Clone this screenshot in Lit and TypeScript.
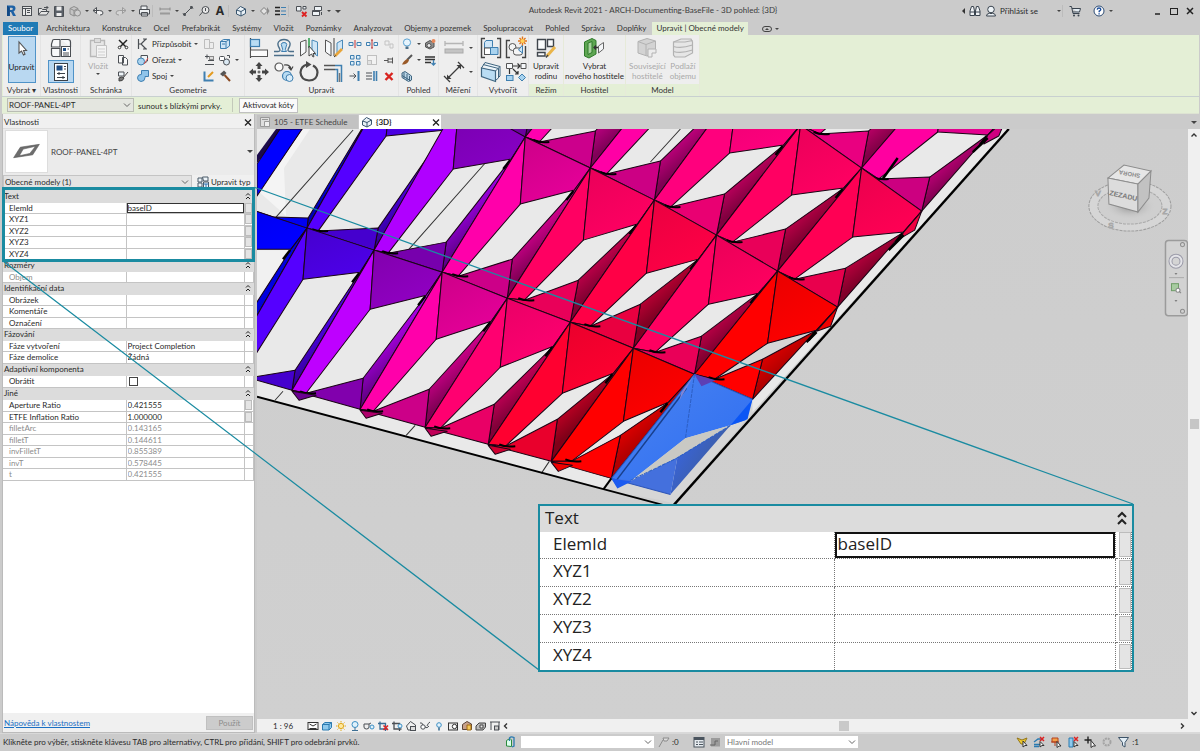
import { LitElement, html, svg, css, nothing } from "lit";
import { customElement, property } from "lit/decorators.js";
import { classMap } from "lit/directives/class-map.js";

type Pt = [number, number];

/* ---------- icon library ---------- */

const K = "#4b4f54";
const B = "#3f7fb0";
const L = "#a9d3ef";

const small: Record<string, unknown> = {
  revit: svg`<path d="M4 2.500H9.500Q12.500 2.700 12.500 5.600Q12.500 7.800 10.500 8.500L13 13H10L8 9H6.800V13H4ZM6.800 4.700V7H8.600Q9.800 7 9.800 5.800Q9.800 4.700 8.600 4.700Z" fill="#1e62a6"/><path d="M4 2.500L6.800 4.700V13H4Z" fill="#134a86"/>`,
  home: svg`<rect x="3.500" y="3.500" width="9" height="9" fill="#e8e8e8" stroke="${K}"/><path d="M3.500 5.500H12.500M6.500 5.500V12.500M8 7.500H11M8 9.500H11" stroke="${K}" fill="none"/>`,
  open: svg`<path d="M3.500 12V5.500H6.500L7.500 6.500H11.500V8.500M3.500 12L6 8.500H14L11.500 12Z" fill="#e4e4e4" stroke="${K}"/><path d="M9 4.500H13M11.500 3L13 4.500L11.500 6" stroke="${K}" fill="none"/>`,
  save: svg`<path d="M3.500 3.500H12.500V13.500H3.500Z" fill="#5a6068" stroke="${K}"/><rect x="5.500" y="3.500" width="5" height="4" fill="#eee"/><rect x="5.500" y="10" width="5" height="3" fill="#eee"/>`,
  sync: svg`<path d="M3 5.500L7 3.500L11 5.500V11L7 13L3 11ZM3 5.500L7 7.500L11 5.500M7 7.500V13" fill="#c4c4c4" stroke="#8e8e8e"/><circle cx="10.500" cy="10" r="3" fill="#cfcfcf" stroke="#8e8e8e"/>`,
  undo: svg`<path d="M3 7.500H9.500Q13 7.500 13 10Q13 12 10 12M3 7.500L6.500 4.500V10.500Z" fill="#f0f0f0" stroke="${K}"/>`,
  redo: svg`<path d="M13 7.500H6.500Q3 7.500 3 10Q3 12 6 12M13 7.500L9.500 4.500V10.500Z" fill="#d4d4d4" stroke="#9c9c9c"/>`,
  print: svg`<path d="M5 6V3H11V6M3.500 6.500H13.500V11H3.500ZM5.500 9.500H11.500V13H5.500Z" fill="#eef1f3" stroke="${K}"/>`,
  measure: svg`<path d="M3 6H13M3 4.500V7.500M13 4.500V7.500" stroke="#8a8a8a"/><rect x="3" y="9.500" width="10" height="2" fill="#9a9a9a"/>`,
  dim: svg`<path d="M4 12L12 4M3 10.500L5.500 13M10.500 3L13 5.500" stroke="${K}"/><circle cx="4.500" cy="11.500" r="1.400" fill="${K}"/><circle cx="11.500" cy="4.500" r="1.400" fill="${K}"/>`,
  tag: svg`<path d="M3.500 12.500L7 8.500" stroke="${K}"/><circle cx="9.500" cy="7" r="3.500" fill="#e6e6e6" stroke="${K}"/><path d="M9.500 5V8" stroke="${K}"/>`,
  box3d: svg`<path d="M3.500 7L7.500 3.500L12.500 6V10.500L8 13L3.500 11Z" fill="#e9f1f7" stroke="#39556e"/><path d="M3.500 7L8 8.500L12.500 6M8 8.500V13" fill="none" stroke="#39556e"/>`,
  diamond: svg`<path d="M8 4.500L11.500 8L8 11.500L4.500 8Z" fill="#e2e2e2" stroke="#7d7d7d"/><path d="M11 4V12L13.500 8Z" fill="#8a8a8a"/>`,
  thin: svg`<path d="M3 4.500H8M3 8H8M3 11.500H8" stroke="#222" stroke-width="1.500"/><path d="M9 4.500H14M9 8H14M9 11.500H14" stroke="${B}"/>`,
  closeWin: svg`<path d="M3.500 3.500H8V8H3.500ZM10 3.500H13V6H10Z" fill="#eef2f5" stroke="${K}"/><path d="M9 9L13.500 13.500M13.500 9L9 13.500" stroke="#d22" stroke-width="1.800"/>`,
  switchWin: svg`<path d="M5.500 3.500H12.500V7.500H5.500ZM3.500 7.500H10.500V12.500H3.500Z" fill="#eef2f5" stroke="${K}"/><path d="M3.500 8.500H10.500M12.500 9V12" stroke="${K}"/>`,
  binoc: svg`<path d="M3 8L4.500 3.500H6.500L7.500 8V12.500H3ZM13 8L11.500 3.500H9.500L8.500 8V12.500H13Z" fill="#f0f3f6" stroke="#39434e"/><path d="M3 9H7.500M8.500 9H13" stroke="#39434e"/>`,
  user: svg`<circle cx="8" cy="6.500" r="3.300" fill="#eef4f8" stroke="#39434e"/><path d="M3.500 13Q3.500 10.500 6.500 10.300Q8 11 9.500 10.300Q12.500 10.500 12.500 13Z" fill="#eef4f8" stroke="#39434e"/>`,
  cart: svg`<path d="M2.500 3.500H4.500L6 10.500H12.500M5 5.500H13.500L12.500 9H6" fill="#e3edf5" stroke="#39434e"/><circle cx="7" cy="12.500" r="1" fill="#39434e"/><circle cx="11.500" cy="12.500" r="1" fill="#39434e"/>`,
  help: svg`<circle cx="8" cy="8" r="5" fill="#fff" stroke="#2d4b73"/><path d="M6.200 6.600Q6.300 5 8 5Q9.800 5 9.800 6.500Q9.800 7.500 8.200 8.200V9.200M8.100 10.300V11.500" stroke="#1d4f9c" stroke-width="1.400" fill="none"/>`,
  cut: svg`<path d="M4 4L12 12M12 4L4 12" stroke="#222" stroke-width="1.500"/><circle cx="4.500" cy="11.500" r="1.300" fill="#fff" stroke="#333"/><circle cx="11.500" cy="11.500" r="1.300" fill="#fff" stroke="#333"/>`,
  copy: svg`<path d="M3.500 3.500H8.500V11H3.500ZM7.500 5.500H10.500L12.500 7.500V13H7.500Z" fill="#f8f8f8" stroke="${K}"/>`,
  brush: svg`<path d="M3.500 4H9V8H3.500Z" fill="#eef4f8" stroke="${K}"/><path d="M13 4L8 10M4 10Q7 8 9 10Q8 13.500 4 13Z" fill="#777" stroke="#444"/>`,
  cope: svg`<path d="M3.500 3V13M3.500 8H6M11 3L6 8L11 13M8 3L12 3M8 13H12" fill="none" stroke="${K}" stroke-width="1.200"/>`,
  trimCut: svg`<path d="M6 3.500H12.500V9L10 11H6Z" fill="#eff3f6" stroke="${K}"/><circle cx="6" cy="9.500" r="3.500" fill="${L}" stroke="${B}"/><path d="M9 12L13 6" stroke="#d55" />`,
  join: svg`<path d="M6.500 2.500H13.500V8.500H10V9.500Q10 13.500 6 13.500Q2.500 13 2.500 9.800Q2.500 6.500 6.500 6.300Z" fill="#8fc4ea" stroke="${B}"/>`,
  geoA: svg`<path d="M3.500 3.500H8.500V12.500H3.500ZM8.500 6.500H12.500V12.500H8.500Z" fill="#ededed" stroke="#bdbdbd"/>`,
  geoB: svg`<path d="M3.500 5.500H9V12.500H3.500ZM9 5.500L12.500 3.500V10L9 12.500M3.500 5.500L6.500 3.500H12.500" fill="#cfe6f7" stroke="${B}"/><path d="M5 8H8" stroke="${B}"/>`,
  geoC: svg`<path d="M4 4.500H8M6 2.500V6.500M7 8.500H13M4 12.500H13" stroke="${K}"/><rect x="8.500" y="4.500" width="4" height="3" fill="#ddd" stroke="#888"/>`,
  geoD: svg`<rect x="2.500" y="4.500" width="5" height="4" rx="1" fill="#fff" stroke="${K}"/><circle cx="9.500" cy="10" r="3" fill="#dbe9f3" stroke="${K}"/><path d="M10 3.500H12.500V6" stroke="${K}" fill="none"/>`,
  geoE: svg`<path d="M3.500 3.500V12.500H12.500" stroke="${B}" stroke-width="2" fill="none"/><path d="M7 9L12 4" stroke="#e39a1e" stroke-width="2"/>`,
  hammer: svg`<path d="M3 6L7 2.500L9.500 5L6 8.500Z" fill="#555"/><path d="M7.500 7L13 13" stroke="#8a4a22" stroke-width="2"/>`,
  splitA: svg`<path d="M2 6.500H6V9.500H2ZM10 6.500H14V9.500H10Z" fill="#eef6fb" stroke="${B}"/><path d="M8 4V12" stroke="#c33"/>`,
  splitB: svg`<path d="M2.500 6.500H6V9.500H2.500ZM10 6.500H13.500V9.500H10Z" fill="#eef6fb" stroke="${B}"/><path d="M8 4V12M7 4H9M7 12H9" stroke="#b33"/>`,
  unpin: svg`<path d="M4 5H8V9H4ZM9 8H12V12H9Z" fill="#efefef" stroke="#c3c3c3"/>`,
  array: svg`<path d="M3.500 3.500H7V7H3.500ZM9.500 3.500H13V7H9.500ZM3.500 9.500H7V13H3.500ZM9.500 9.500H13V13H9.500Z" fill="#dbeefa" stroke="${B}"/>`,
  scale: svg`<rect x="3.500" y="3.500" width="9" height="9" fill="#f2f2f2" stroke="#c0c0c0"/><rect x="3.500" y="8.500" width="4" height="4" fill="#e2e2e2" stroke="#c0c0c0"/>`,
  pin: svg`<path d="M3 8.500H7M7 6V11M7 7H11.500V10H7M11.500 5.500V11.500" stroke="#555" fill="none"/>`,
  trimOne: svg`<path d="M2.500 8H9M6.500 5.500L9 8L6.500 10.500" stroke="${K}" fill="none"/><path d="M11.500 3V13" stroke="${B}" stroke-width="2"/>`,
  trimMany: svg`<path d="M2 5H8M2 8H8M2 11H8" stroke="${K}"/><path d="M10 3V13M12.500 3V13" stroke="${B}" stroke-width="1.600"/>`,
  del: svg`<path d="M4.500 5L11.500 12M11.500 5L4.500 12" stroke="#d8231f" stroke-width="2.400"/>`,
  bulb: svg`<circle cx="8" cy="6.500" r="3.600" fill="#e6f4fd" stroke="#5aa2d2"/><path d="M6.500 10.500H9.500V13H6.500Z" fill="#4b6f8a"/>`,
  override: svg`<path d="M3.500 7L8 4.500L12 7V11L8 13L3.500 11Z" fill="#8d8d8d" stroke="#555"/><circle cx="11.500" cy="5" r="2" fill="#e8885a"/><circle cx="7" cy="9.500" r="2" fill="#eee" stroke="#555"/>`,
  paint: svg`<path d="M13 3L8 8" stroke="#555" stroke-width="2"/><path d="M8.500 7L10 8.500Q8 13 3 12.500Q5 8 8.500 7Z" fill="#9a5a28"/>`,
  lines: svg`<path d="M3 5H13M3 7.500H13M3 10.500H9" stroke="#333" stroke-width="1.400"/><path d="M11.500 8V13M9.500 11L11.500 13L13.500 11" stroke="${B}" stroke-width="1.300" fill="none"/>`,
  section: svg`<path d="M3 5L6 3.500L12.500 8V12L9.500 13.500L3 9.500Z" fill="#bcd7e8" stroke="#3f6580"/><path d="M5 4.500V10.500M8 6V12.500M10.500 8V13M3 7.500L12 13" stroke="#3f6580" fill="none"/>`,
  sheet: svg`<path d="M3.500 3.500H12.500V12.500H3.500Z" fill="#dedede" stroke="#999"/><path d="M7.500 7.500H12.500V12.500H7.500ZM5 5.500H11" stroke="#999" fill="#efefef"/>`,
  scaleBox: svg`<rect x="3" y="4.500" width="10" height="7" fill="#fff" stroke="#333"/><path d="M4.500 6L8 8L11.500 6M4.500 10.500H11.500" stroke="#333" fill="none"/>`,
  vcube: svg`<path d="M3.500 6.500L6 4.500H12.500V9.500L10 12H3.500ZM3.500 6.500H10V12M10 6.500L12.500 4.500" fill="#8fc9ec" stroke="#2b7ab0"/>`,
  sun: svg`<circle cx="8" cy="8" r="2.600" fill="#ffe9a0" stroke="#e0a81c"/><path d="M8 3V4.500M8 11.500V13M3 8H4.500M11.500 8H13M4.500 4.500L5.500 5.500M10.500 10.500L11.500 11.500M11.500 4.500L10.500 5.500M4.500 11.500L5.500 10.500" stroke="#e0a81c"/>`,
  shadow: svg`<circle cx="8" cy="6.500" r="3" fill="#dff1fb" stroke="#3d8fc4"/><path d="M5 12.500H11M8 9.500V12" stroke="#3d6f94"/>`,
  render: svg`<path d="M3 6H8V9Q8 11 5.500 11Q3 11 3 9ZM8 6L10 5" fill="#eee" stroke="${K}"/><circle cx="11" cy="9" r="2" fill="#dff1fb" stroke="#3d8fc4"/>`,
  cropOff: svg`<path d="M5 3.500V11H12.500M3 5.500H10.500V13" stroke="#3a6d94" fill="none" stroke-width="1.300"/><path d="M8.500 7.500L13 12M13 7.500L8.500 12" stroke="#d22" stroke-width="1.600"/>`,
  cropShow: svg`<path d="M5 3.500V11H12.500M3 5.500H10.500V13" stroke="${K}" fill="none" stroke-width="1.300"/><circle cx="11" cy="8" r="2" fill="#dff1fb" stroke="#3d8fc4"/>`,
  lock3d: svg`<path d="M3.500 8L7.500 3.500L12.500 7V12H5Z" fill="#f0f0f0" stroke="${K}"/><rect x="7.500" y="8.500" width="5" height="4" fill="#ddd" stroke="${K}"/>`,
  glasses: svg`<path d="M3 5Q5 4 6 7M13 4Q11 5 10 8" stroke="${K}" fill="none"/><circle cx="6" cy="9" r="2.200" fill="#fff" stroke="${K}"/><path d="M8 9Q10 11 12 8" stroke="${K}" fill="none"/>`,
  reveal: svg`<circle cx="8" cy="7" r="2.300" fill="#e5f4fd" stroke="#3d8fc4"/><path d="M8 9.500V12.500" stroke="#3d6f94" stroke-width="1.600"/>`,
  tempView: svg`<rect x="3.500" y="5" width="9" height="7" fill="#eee" stroke="#333"/><circle cx="9.500" cy="8.500" r="2.200" fill="#fff" stroke="#333"/>`,
  analysis: svg`<path d="M3.500 6.500L8 3.500L12.500 6V11.500H3.500Z" fill="#c7a08a" stroke="#5b4438"/><path d="M8 7H12V12H8Z" fill="#f5c95a" stroke="#a06a10"/>`,
  displace: svg`<path d="M3 8L6 5H12.500V9L10 12H3Z" fill="#bbb" stroke="#444"/><path d="M7 7H10V10H7Z" fill="#eee" stroke="#444"/>`,
  constraint: svg`<path d="M3 4H13M4 4V12M12 4V12" stroke="${K}" fill="none"/><rect x="7.500" y="8" width="4" height="4" fill="#ccc" stroke="${K}"/>`,
  worksets: svg`<path d="M3.500 6.500L7 4.500L8.500 6V12.500L3.500 12Z" fill="#dfe" stroke="#2b8a3e"/><path d="M6.500 7V4Q8 2 11 3.500V12L9 13" fill="none" stroke="#2b7ab0" stroke-width="1.300"/>`,
  filterOff: svg`<path d="M3 13L7 6M7 4H13L11 7H8Z" fill="#ddd" stroke="#8b8b8b"/>`,
  options: svg`<rect x="3" y="3.500" width="10" height="9.500" fill="#e6ebef" stroke="#4a545e"/><rect x="3" y="3.500" width="10" height="2.500" fill="#4a545e"/><path d="M5 8H7M8 8H12M5 10.500H7M8 10.500H12" stroke="#4a545e"/>`,
  active: svg`<rect x="4" y="4" width="9" height="8.500" fill="#9b9b9b"/><path d="M3 11H8V7H11" stroke="#666" fill="none"/>`,
  selLinks: svg`<path d="M3 4L8 6L13 4L10 10H7Z" fill="#efc92c" stroke="#94761a"/><path d="M9 7V13L11 11.500H13Z" fill="#fff" stroke="#333"/>`,
  selUnder: svg`<path d="M3 8L7 5H12M3 10.500H9M3 12.500H8" stroke="#2b7ab0" fill="none" stroke-width="1.300"/><path d="M9 3L13 7M13 3L9 7" stroke="#d22" stroke-width="1.500"/><path d="M9 7.500V13L11 11.500H13Z" fill="#fff" stroke="#333"/>`,
  selPin: svg`<path d="M4 4H10V8H4ZM3 8H11M7 8V12" fill="#f3a14a" stroke="#b5401c"/><path d="M9 7.500V13.500L11 12H13Z" fill="#fff" stroke="#333"/>`,
  selFace: svg`<path d="M4 4H8V13H4Z" fill="#8fc9ec" stroke="#2b7ab0"/><path d="M9 3L13 7M13 3L9 7" stroke="#d22" stroke-width="1.500"/><path d="M9 7.500V13L11 11.500H13Z" fill="#fff" stroke="#333"/>`,
  selDrag: svg`<path d="M6 2.500V9.500M2.500 6H9.500" stroke="#222" stroke-width="1.400"/><path d="M9 6.500V13.500L11 12H13.500Z" fill="#fff" stroke="#333"/>`,
  progress: svg`<circle cx="8" cy="8" r="3.500" fill="none" stroke="#a3a3a3" stroke-width="2" stroke-dasharray="2 .8"/>`,
  funnel: svg`<path d="M2.500 3.500H12.500L9 8.500V13L6.500 11.500V8.500Z" fill="#e3eef6" stroke="#3c5368"/>`,
  editType: svg`<path d="M3 4H7V8H3ZM3 9H7V13H3ZM7.500 3H13V7H8.500ZM8.500 8H13.500V13.500H8.500Z" fill="#edf4f9" stroke="#4b5a68"/><path d="M8.500 10H13.500M11 10V13" stroke="#2b6fae"/>`,
};

const big: Record<string, unknown> = {
  cursor: svg`<path d="M9 5V16L11.500 14L13.500 18L15 17.300L13.500 13.500H16.500Z" fill="#fff" stroke="#555" stroke-width="1.100"/>`,
  types: svg`<path d="M3.500 5Q3.500 3.500 5 3.500H11V11H2.500V8ZM12 3.500H19Q21.500 3.500 21.500 6V11M2.500 12.500H11V20.500H4Q2.500 20 2.500 18Z" fill="#f8f9fa" stroke="#4b4f54" stroke-width="1.200"/><rect x="12.500" y="10.500" width="9" height="10" fill="#fff" stroke="#4b4f54"/><rect x="14" y="12" width="3" height="3" fill="#1f4e86"/><path d="M14 17H20M14 19H20M18.500 13H20" stroke="#4b4f54"/>`,
  props: svg`<rect x="5.500" y="3.500" width="13" height="17" fill="#fff" stroke="#3a4148"/><rect x="7.500" y="5.500" width="6" height="5" fill="#1f4e86"/><path d="M15 6.500H17M15 9H17M8 13.500H16M8 17.500H16M10 12V15M14 16V19" stroke="#3a4148"/>`,
  paste: svg`<path d="M4.500 4.500H18.500V20.500H4.500Z" fill="#e6e6e6" stroke="#b8b8b8" stroke-width="1.400"/><rect x="8.500" y="2.500" width="6" height="4" fill="#dcdcdc" stroke="#b8b8b8"/><path d="M10.500 9.500H20.500V21.500H10.500Z" fill="#f4f4f4" stroke="#c2c2c2"/><path d="M12 13H19M12 16H19M12 19H19" stroke="#cfcfcf"/>`,
  align: svg`<path d="M3.500 2V22" stroke="#444" stroke-width="1.200"/><rect x="3.500" y="3.500" width="9" height="7" fill="#b9dcf3" stroke="${B}" stroke-width="1.200"/><rect x="3.500" y="14" width="17" height="6.500" fill="#fafafa" stroke="#555"/>`,
  offset: svg`<path d="M2 19.500H22M2 15.500H6Q9 15.500 7.500 12.500Q4 7 8 4.500Q12 2.500 16 4.500Q20 7 16.500 12.500Q15 15.500 18 15.500H22" fill="none" stroke="#4b6f8a" stroke-width="1.400"/><path d="M9.500 15.500Q11.500 13.500 10 11Q8.500 8 10 7Q12 6 14 7Q15.500 8 14 11Q12.500 13.500 14.500 15.500Z" fill="#b9dcf3" stroke="${B}"/>`,
  mirrorPick: svg`<path d="M3.500 6L9 4V16L3.500 20Z" fill="#f6f8fa" stroke="#555"/><path d="M20.500 6L15 4V16L20.500 20Z" fill="#cfe6f7" stroke="#4b8ab8"/><path d="M12 2V12" stroke="#2a9b4a" stroke-width="1.500"/><path d="M12 10V20L14.500 18L16 21L17 20.500L16 17.500H18.500Z" fill="#fff" stroke="#444"/>`,
  mirrorDraw: svg`<path d="M3.500 4L9 7V20L3.500 16Z" fill="#f6f8fa" stroke="#555"/><path d="M20.500 4L15 7V17L20.500 13Z" fill="#cfe6f7" stroke="#4b8ab8"/><path d="M12 2V20" stroke="#444"/><path d="M13 20L20 13" stroke="#e8a53a" stroke-width="2.600"/><path d="M12 21L13.800 19.500" stroke="#333"/>`,
  move: svg`<path d="M12 2L15.500 6H8.500ZM12 22L15.500 18H8.500ZM2 12L6 8.500V15.500ZM22 12L18 8.500V15.500Z" fill="#444"/><path d="M12 6V9M12 15V18M6 12H9M15 12H18" stroke="#444" stroke-width="3"/><path d="M10.500 12H13.500M12 10.500V13.500" stroke="#444"/>`,
  copyMove: svg`<circle cx="7" cy="7" r="4" fill="#fafafa" stroke="#555" stroke-width="1.200"/><path d="M12 5Q18 4 19 9M16.500 7L19 10L21 6.500" fill="none" stroke="#444" stroke-width="1.200"/><circle cx="15" cy="16" r="4.500" fill="#b9dcf3" stroke="${B}" stroke-width="1.200"/><circle cx="17.500" cy="18" r="3.500" fill="#d8ecf9" stroke="${B}"/>`,
  rotate: svg`<path d="M16 5.500Q20.500 8 20.500 12.500Q20 20.500 12 20.500Q4 20 3.500 12.500Q4 6 10 4.500" fill="none" stroke="#4a4a4a" stroke-width="2.200"/><path d="M9 1V8L14.500 4.500Z" fill="#4a4a4a"/>`,
  corner: svg`<path d="M2 5.500H13M2 9.500H13" stroke="#555" stroke-width="1.300"/><path d="M13 5.500H19.500V22M13 9.500H15.500V22" stroke="${B}" stroke-width="1.500" fill="none"/><path d="M17.500 13V22" stroke="#777" stroke-width="1.500"/>`,
  measureBig: svg`<path d="M3 7.500H21M3 5V10M21 5V10" stroke="#b5b5b5" stroke-width="1.300"/><rect x="3" y="13" width="18" height="4" fill="#c4c4c4" stroke="#aaa"/>`,
  dimBig: svg`<path d="M5 19L19 5M2 16L8 22M16 2L22 8" stroke="#3c3c3c" stroke-width="1.300"/><path d="M5 19V14.500L9.500 19ZM19 5V9.500L14.500 5Z" fill="#3c3c3c"/>`,
  group: svg`<path d="M6 2.500H2.500V21.500H6M18 2.500H21.500V21.500H18" fill="none" stroke="#444" stroke-width="1.400"/><path d="M5.500 6.500L7 4.500H13.500V10.500L12 12H5.500Z" fill="#cfe6f7" stroke="${B}"/><rect x="5.500" y="12" width="6" height="6.500" fill="#fff" stroke="#555"/><path d="M11.500 11.500H19V18.500H11.500Z" fill="#a9d3ef" stroke="${B}"/>`,
  assembly: svg`<path d="M6 4.500H2.500V21.500H6M18 21.500H21.500V10" fill="none" stroke="#444" stroke-width="1.400"/><circle cx="8.500" cy="11" r="3.500" fill="#f5f5f5" stroke="#555"/><rect x="9.500" y="12" width="9" height="7" rx="2.500" fill="#f5f5f5" stroke="#555"/><path d="M14.500 14L18.500 9V17Z" fill="#cfe6f7" stroke="${B}"/><path d="M18.500 .5V9.500M14 5H23M15.500 2L21.500 8M21.500 2L15.500 8" stroke="#e2761b" stroke-width="1.400"/><circle cx="18.500" cy="5" r="2" fill="#ffd35a"/>`,
  parts: svg`<path d="M6 2.500L21 6.500V16L18 19" fill="#eef6fb" stroke="#3f6580"/><path d="M4 4.500L19.500 8.500V18L17 20" fill="#eef6fb" stroke="#3f6580"/><path d="M2.500 8L16.500 11V21.500L2.500 16.500Z" fill="#b9dcf3" stroke="#3f6580" stroke-width="1.200"/><path d="M2.500 8L6 2.500M16.500 11L21 6.500" stroke="#3f6580"/>`,
  similar: svg`<path d="M2.500 3.500H8.500V8.500H2.500ZM17 3.500H22V8.500H17Z" fill="#f6f8fa" stroke="#555"/><path d="M9 6H16M13.500 3.500L16 6L13.500 8.500M5.500 9V14M9 9L14 14M14 11V14H11" stroke="#333" fill="none" stroke-width="1.200"/><rect x="2.500" y="15.500" width="6.500" height="5" fill="#a9d3ef" stroke="${B}"/><path d="M18 14L21.500 17.500L18 21L14.500 17.500Z" fill="#a9d3ef" stroke="${B}"/>`,
  family: svg`<path d="M3.500 3.500H11.500V13.500H3.500ZM13.500 3.500H19.500V10.500H13.500ZM3.500 16.500H11V20H3.500Z" fill="#fafbfc" stroke="#3f454c" stroke-width="1.400"/><path d="M13 20L21 11" stroke="#eab54a" stroke-width="3"/><path d="M12 21.500L14 19" stroke="#444" stroke-width="1.400"/>`,
  host: svg`<path d="M2.500 6L10 2.500L14 4.500V18L7 22L2.500 20Z" fill="#5fa653" stroke="#2f7a2b"/><path d="M6 7L10 5.500V16.500L6 18.500Z" fill="#a9d39f" stroke="#2f7a2b"/><path d="M12 11.500H17M14 9.500L12 11.500L14 13.500" stroke="#333" fill="none" stroke-width="1.300"/><path d="M16.500 10L21.500 6.500V13L16.500 17Z" fill="#f4f6f8" stroke="#666"/>`,
  relHost: svg`<path d="M3 5.500L12 2.500L20.500 5V14L12 20L3 17Z" fill="#d3d3d3" stroke="#b2b2b2"/><path d="M3 5.500L11 8.500L20.500 5M11 8.500V19.500" fill="none" stroke="#b2b2b2"/><path d="M13 13H21V17H17V21H13Z" fill="#ececec" stroke="#b2b2b2"/>`,
  floors: svg`<path d="M2.500 6L10 3H20L21.500 6V17L14 21H4L2.500 19Z" fill="#e6e6e6" stroke="#b2b2b2" stroke-width="1.200"/><path d="M2.500 6H14L21.500 4.500M2.500 10.500Q10 13 21.500 9M2.500 15.500Q10 18 21.500 14" fill="none" stroke="#b2b2b2" stroke-width="1.200"/>`,
};

@customElement("tool-icon")
export class ToolIcon extends LitElement {
  @property() name = "";
  @property({ type: Boolean }) large = false;

  static styles = css`
    :host { display: block; flex: none; line-height: 0; }
    svg { display: block; }
  `;

  render() {
    const n = this.large ? 24 : 16;
    return html`<svg width=${n} height=${n} viewBox="0 0 ${n} ${n}" fill="none" aria-hidden="true">
      ${(this.large ? big : small)[this.name] ?? nothing}
    </svg>`;
  }
}

/* ---------- 3D model of the panelled roof ---------- */

interface Panel {
  tone: [number, number, number];
  /** corners: top-left, top-right, bottom-right, bottom-left */
  c: [Pt, Pt, Pt, Pt];
  /** opening: bottom-left, top-left, top-right, bottom-right */
  o: [Pt, Pt, Pt, Pt];
  glass?: string;
}

const panels: Panel[] = [
  /* fourth row */
  { tone: [255, 0, 140], c: [[885, 20], [945, 70], [861, 168], [800, 125]], o: [[819, 134], [870, 90], [930, 70], [868, 131]] },
  { tone: [255, 0, 160], c: [[945, 70], [1005, 115], [921, 211], [861, 168]], o: [[878, 179], [937, 132], [987, 135], [929, 177]] },
  /* third row */
  { tone: [160, 0, 235], c: [[545, 20], [612, 30], [525, 137], [459, 108]], o: [[470, 105], [530, 60], [590, 50], [532, 100]] },
  { tone: [255, 0, 175], c: [[612, 30], [676, 60], [590, 168], [525, 137]], o: [[539, 142], [600, 75], [655, 65], [595, 131]] },
  { tone: [255, 0, 165], c: [[676, 60], [738, 85], [654, 200], [590, 168]], o: [[606, 174], [664, 112], [722, 101], [660, 161]] },
  { tone: [255, 0, 125], c: [[738, 85], [800, 125], [716, 235], [654, 200]], o: [[670, 207], [729, 153], [783, 145], [724, 194]] },
  { tone: [255, 0, 98], c: [[800, 125], [861, 168], [777, 271], [716, 235]], o: [[732, 242], [791, 195], [843, 188], [785, 229]] },
  { tone: [255, 0, 84], c: [[861, 168], [921, 211], [837, 307], [777, 271]], o: [[794, 279], [852, 237], [903, 232], [845, 268]] },
  /* second row */
  { tone: [0, 0, 255], c: [[325, 50], [393, 75], [307, 228], [241, 206]], o: [[242, 216], [315, 110], [373, 110], [308, 218]] },
  { tone: [85, 0, 255], c: [[393, 75], [459, 108], [374, 250], [307, 228]], o: [[318, 231], [386, 136], [446, 130], [378, 228]] },
  { tone: [176, 0, 255], c: [[459, 100], [525, 137], [442, 272], [374, 250]], o: [[388, 253], [453, 169], [511, 159], [446, 242]] },
  { tone: [255, 0, 170], c: [[525, 137], [590, 168], [507, 298], [442, 272]], o: [[458, 276], [520, 204], [574, 190], [512, 259]] },
  { tone: [255, 0, 98], c: [[590, 168], [654, 200], [570, 322], [507, 298]], o: [[524, 300], [583, 240], [637, 224], [578, 280]] },
  { tone: [255, 0, 70], c: [[654, 200], [716, 235], [633, 348], [570, 322]], o: [[590, 326], [646, 273], [698, 259], [640, 304]] },
  { tone: [255, 0, 96], c: [[716, 235], [777, 271], [694, 374], [633, 348]], o: [[655, 352], [708, 304], [758, 293], [701, 336]] },
  { tone: [255, 0, 0], c: [[777, 271], [837, 307], [752, 399], [694, 374]], o: [[714, 379], [767, 343], [816, 330], [762, 359]], glass: "#d6d6d6" },
  /* bottom row */
  { tone: [0, 0, 255], c: [[241, 206], [307, 228], [225, 371], [158, 350]], o: [[170, 350], [237, 249], [291, 249], [226, 350]] },
  { tone: [85, 0, 255], c: [[307, 228], [374, 250], [292, 390], [225, 371]], o: [[240, 379], [303, 279], [360, 272], [295, 370]] },
  { tone: [190, 0, 255], c: [[374, 250], [442, 272], [360, 409], [292, 390]], o: [[306, 393], [370, 309], [426, 295], [363, 378]] },
  { tone: [255, 0, 170], c: [[442, 272], [507, 298], [425, 427], [360, 409]], o: [[373, 411], [436, 339], [491, 321], [429, 389]] },
  { tone: [255, 0, 112], c: [[507, 298], [570, 322], [488, 444], [425, 427]], o: [[440, 428], [500, 367], [553, 346], [494, 404]] },
  { tone: [255, 0, 48], c: [[570, 322], [633, 348], [551, 461], [488, 444]], o: [[505, 446], [562, 393], [613, 373], [557, 419]] },
  { tone: [255, 0, 0], c: [[633, 348], [694, 374], [611, 478], [551, 461]], o: [[571, 461], [623, 421], [668, 402], [620, 435]] },
];

const pts = (...p: Pt[]) => p.map((q) => q.join(",")).join(" ");

const shade = (t: [number, number, number], k: number) =>
  `rgb(${t.map((v) => Math.round(v * k)).join(",")})`;

/** How much light the upper facet keeps, by hue: pure blue and red stay bright, violet dims. */
const falloff = ([r, , b]: [number, number, number]) =>
  r === 0 ? 1 : r < 100 ? 0.86 : r < 255 ? 0.72 : b > 150 ? 0.85 : 0.97;

@customElement("model-canvas")
export class ModelCanvas extends LitElement {
  static styles = css`
    :host { display: block; min-height: 0; min-width: 0; overflow: hidden; background: #cfcfcf; }
    svg { display: block; width: 100%; height: 100%; }
    .edge { stroke: #1a0414; stroke-width: 1; stroke-linejoin: round; }
    .cube { font: bold 7px "Liberation Sans", Arial, sans-serif; fill: #777; text-anchor: middle; }
    .faint { font-size: 6px; fill: #8a8a8a; }
    .compass { font: 8px "Liberation Sans", Arial, sans-serif; fill: #e2e2e2; stroke: #a8a8a8; stroke-width: 1; text-anchor: middle; }
  `;

  private panel(p: Panel, i: number) {
    const [tl, tr, br, bl] = p.c;
    const [o1, o2, o3, o4] = p.o;
    const f = falloff(p.tone);
    const red = p.tone[2] === 0;
    return svg`
      <defs>
        <linearGradient id="d${i}" gradientUnits="userSpaceOnUse" x1=${o4[0]} y1=${o4[1] - 20} x2=${o4[0] + 22} y2=${o4[1] + 6}>
          <stop offset="0" stop-color=${shade(p.tone, red ? 0.98 : 0.88)}></stop>
          <stop offset="1" stop-color=${shade(p.tone, red ? 0.7 : 0.5)}></stop>
        </linearGradient>
        <linearGradient id="t${i}" x1="0" y1="0" x2="0.6" y2="1">
          <stop offset="0" stop-color=${shade(p.tone, f * 0.94)}></stop>
          <stop offset="1" stop-color=${shade(p.tone, Math.min(1, f * 1.06))}></stop>
        </linearGradient>
      </defs>
      ${p.glass ? svg`<polygon points=${pts(o1, o2, o3, o4)} fill=${p.glass}></polygon>` : nothing}
      <polygon class="edge" points=${pts(bl, tl, o2, o1)} fill=${shade(p.tone, 1)}></polygon>
      <polygon class="edge" points=${pts(tl, tr, o3, o2)} fill="url(#t${i})"></polygon>
      <polygon class="edge" points=${pts(tr, br, o4, o3)} fill="url(#d${i})"></polygon>
      <polygon class="edge" points=${pts(bl, br, o4, o1)} fill=${shade(p.tone, red ? 1 : f * 0.94)}></polygon>
      <path d="M${o1[0] - 6} ${o1[1] - 2}Q${o1[0]} ${o1[1] + 1} ${o1[0] + 10} ${o1[1]}" stroke="#000" stroke-width="2" fill="none"></path>
      <path d="M${o3[0] - 1} ${o3[1] + 1}L${o3[0] - 8} ${o3[1] + 10}" stroke="#000" stroke-width="2.400"></path>`;
  }

  render() {
    return html`<svg viewBox="257 129 930 590" preserveAspectRatio="xMinYMin slice" fill="none" role="img" aria-label="{3D}">
      <defs>
        <linearGradient id="bg" x1="0" y1="0" x2="0" y2="1">
          <stop offset="0" stop-color="#cdcdcd"></stop><stop offset="1" stop-color="#d0d0d0"></stop>
        </linearGradient>
        <linearGradient id="blue" x1="0" y1="0" x2="1" y2="1">
          <stop offset="0" stop-color="#4b84f0"></stop><stop offset="1" stop-color="#2c6cf2"></stop>
        </linearGradient>
        <linearGradient id="blueDark" gradientUnits="userSpaceOnUse" x1="685" y1="450" x2="710" y2="465">
          <stop offset="0" stop-color="#3a63cf"></stop><stop offset="1" stop-color="#3c5ea8"></stop>
        </linearGradient>
        <radialGradient id="cubeShade"><stop offset="0" stop-color="#8d8d8d"></stop><stop offset="1" stop-color="#cfcfcf" stop-opacity="0"></stop></radialGradient>
      </defs>
      <rect x="257" y="129" width="930" height="590" fill="url(#bg)"></rect>

      <polygon points="257,129 1008,129 752,412 690,420 611,479 603,489 257,396" fill="#e9e9e9"></polygon>
      <polygon points="752,400 752,412 673,503 662,500 603,489 611,478" fill="#d6d6d6"></polygon>
      <path d="M257 180L281 129H310L284 168L286 216L257 190Z" fill="#f4f4f4"></path>
      <path d="M257 250L300 250L262 310H257Z" fill="#f1f1f1"></path>

      <path d="M353 130L276 217M485 163L408 250M680 129L650 162" stroke="#333"></path>
      <path d="M283 391L275 400M415 425L406 435M549 461L541 473" stroke="#333"></path>

      ${panels.map((p, i) => this.panel(p, i))}

      <polygon points="257,163 284,129 276,129 257,155" fill="#1b0a4a"></polygon>
      <polygon points="257,164 280,129 302,129 257,196" fill="#0000ff" class="edge"></polygon>
      <path d="M897 158L882 179" stroke="#000" stroke-width="2.500"></path>

      <!-- lower tips under the bottom edge -->
      <path d="M292 391L299 400L316 395Z" fill="#6a0090" class="edge"></path>
      <path d="M360 410L366 418L382 413Z" fill="#b0006c" class="edge"></path>
      <path d="M425 428L431 436L447 431Z" fill="#c00058" class="edge"></path>
      <path d="M488 445L495 454L510 449Z" fill="#d00030" class="edge"></path>
      <path d="M551 462L558 471L572 465Z" fill="#f00000" class="edge"></path>

      <!-- outer wings on the right edge -->
      <path d="M1005 119L998 136L983 144L987 135Z" fill="#d00080" class="edge"></path>
      <path d="M921 211L914 230L900 238L903 232Z" fill="#f00040" class="edge"></path>
      <path d="M837 307L830 326L816 331Z" fill="#f00000" class="edge"></path>
      <path d="M987 138L972 152M903 235L888 250M816 332L806 342" stroke="#000" stroke-width="2.400"></path>

      <!-- selected panel -->
      <polygon points="694,374 752,399 745,420 730,425 685,438 631,480 617,487 611,478" fill="url(#blue)"></polygon>
      <polygon points="752,399 747,419 730,425" fill="#0b56f5"></polygon>
      <polygon points="730,425 677,457 670,494" fill="url(#blueDark)"></polygon>
      <polygon points="611,478 631,480 677,457 670,494" fill="#4470dd"></polygon>
      <polygon points="631,480 685,438 730,425 677,457" fill="#c9c9c4"></polygon>
      <path d="M694 374L611 478L670 494M694 374L752 399" stroke="#2d55b8"></path>
      <path d="M694 374L685 438M630 480L676 458L730 425" stroke="#2d5fc4" stroke-dasharray="4 1"></path>
      <path d="M686 388L616 480" stroke="#183f8c" stroke-width="1.500"></path>
      <path d="M694 374L679 400L681 392Z" fill="#7f86d8"></path>
      <path d="M694 374L715 380L701 386Z" fill="#5d3fb4"></path>
      <path d="M611 478L617 488L631 481Z" fill="#1c5bf0"></path>

      <path d="M611 478L603 489" stroke="#000" stroke-width="2"></path>
      <path d="M257 396.500L604 489L668 506" stroke="#000" stroke-width="2"></path>
      <path d="M1008 129L673 505" stroke="#000" stroke-width="2.400"></path>

      <!-- view cube -->
      <ellipse cx="1129" cy="206" rx="41" ry="25" fill="#d6d6d6" stroke="#9d9d9d" stroke-dasharray="3 1"></ellipse>
      <ellipse cx="1129" cy="206" rx="32" ry="18" fill="#cfcfcf" stroke="#a8a8a8" stroke-dasharray="3 1"></ellipse>
      <ellipse cx="1129" cy="206" rx="26" ry="14" fill="url(#cubeShade)"></ellipse>
      <path d="M1107 178L1123 165L1150 171L1137 184Z" fill="#e6e6e6" stroke="#8c8c8c"></path>
      <path d="M1107 178L1137 184V212L1108 204Z" fill="#dcdcdc" stroke="#8c8c8c"></path>
      <path d="M1137 184L1150 171L1148 198L1137 212Z" fill="#c2c2c2" stroke="#8c8c8c"></path>
      <text class="cube" transform="translate(1122 198) rotate(12)">ZEZADU</text>
      <text class="cube faint" transform="translate(1129 172) rotate(191)">SHORA</text>
      <text class="compass" x="1097" y="196">V</text>
      <text class="compass" x="1164" y="214">Z</text>
      <text class="compass" x="1110" y="228">S</text>

      <!-- navigation bar -->
      <rect x="1164.500" y="240.500" width="22" height="75" rx="3" fill="#d2d2d2" stroke="#9b9b9b" stroke-width="1.500"></rect>
      <circle cx="1181.500" cy="244.500" r="2" stroke="#8d8d8d"></circle>
      <circle cx="1181.500" cy="311" r="2" stroke="#8d8d8d"></circle>
      <circle cx="1175" cy="261" r="7" fill="#e4e4e8" stroke="#9a9aa8"></circle>
      <circle cx="1175" cy="261" r="4" fill="#d4d4d4" stroke="#9a9aa8"></circle>
      <path d="M1173.500 273H1176.500L1175 274.500ZM1173.500 300H1176.500L1175 301.500Z" fill="#666"></path>
      <path d="M1168 277.500H1183" stroke="#aaa"></path>
      <rect x="1170.500" y="283.500" width="7" height="7" fill="#a7cba0" stroke="#6f9c68"></rect>
      <circle cx="1177" cy="290" r="2" fill="#fff" stroke="#888"></circle><path d="M1178 291L1180 293" stroke="#888"></path>
    </svg>`;
  }
}

/* ---------- application shell ---------- */

interface Row { head?: boolean; name: string; value?: string; off?: boolean; check?: boolean; focus?: boolean; more?: boolean; }

const rows: Row[] = [
  { head: true, name: "Text" },
  { name: "ElemId", value: "baseID", focus: true, more: true },
  { name: "XYZ1", value: "", more: true },
  { name: "XYZ2", value: "", more: true },
  { name: "XYZ3", value: "", more: true },
  { name: "XYZ4", value: "", more: true },
  { head: true, name: "Rozméry" },
  { name: "Objem", value: "", off: true },
  { head: true, name: "Identifikační data" },
  { name: "Obrázek", value: "" },
  { name: "Komentáře", value: "" },
  { name: "Označení", value: "" },
  { head: true, name: "Fázování" },
  { name: "Fáze vytvoření", value: "Project Completion" },
  { name: "Fáze demolice", value: "Žádná" },
  { head: true, name: "Adaptivní komponenta" },
  { name: "Obrátit", check: true },
  { head: true, name: "Jiné" },
  { name: "Aperture Ratio", value: "0.421555", more: true },
  { name: "ETFE Inflation Ratio", value: "1.000000", more: true },
  { name: "filletArc", value: "0.143165", off: true },
  { name: "filletT", value: "0.144611", off: true },
  { name: "invFilletT", value: "0.855389", off: true },
  { name: "invT", value: "0.578445", off: true },
  { name: "t", value: "0.421555", off: true },
];

const menu = ["Architektura", "Konstrukce", "Ocel", "Prefabrikát", "Systémy", "Vložit", "Poznámky", "Analyzovat", "Objemy a pozemek", "Spolupracovat", "Pohled", "Správa", "Doplňky"];

const quick = ["revit", "home", "open", "save", "sync", ".", "undo", ".", "redo", ".", "print", "|", "measure", ".", "dim", "tag", "A", "|", "box3d", ".", "diamond", "thin", "|", "closeWin", "switchWin", "."];

const viewTools = ["scaleBox", "vcube", "sun", "shadow", "render", "cropOff", "cropShow", "lock3d", "glasses", "reveal", "tempView", "analysis", "displace", "constraint"];

@customElement("app-root")
export class AppRoot extends LitElement {
  static styles = css`
    :host {
      display: grid;
      grid-template-rows: 22px 13px 62px 17px minmax(0, 1fr) 18px;
      position: relative;
      height: 100vh;
      background: #cbcbcb;
      color: #2a2a2a;
      font: 8px/12px Lato, "Noto Sans", sans-serif;
      overflow: hidden;
      --green: #e4efd6;
      --face: #f0f0f0;
      --teal: #1a8ba1;
    }
    * { box-sizing: border-box; }
    button, select, input { font: inherit; color: inherit; margin: 0; padding: 0; border: 0; background: none; border-radius: 0; min-width: 0; }
    button { display: flex; align-items: center; justify-content: center; white-space: nowrap; }
    select { appearance: none; background: #fff url("data:image/svg+xml,%3Csvg xmlns='http://www.w3.org/2000/svg' width='8' height='6'%3E%3Cpath d='M1 1.500L4 4.500L7 1.500' fill='none' stroke='%23666'/%3E%3C/svg%3E") no-repeat right 2px center; }

    .title { display: flex; align-items: center; padding: 0 2px 0 3px; }
    .quick { display: flex; align-items: center; }
    .dot { width: 7px; flex: none; display: flex; justify-content: center; }
    .dot::before, .caret::before { content: ""; border: 2px solid transparent; border-top-color: #444; border-bottom: 0; }
    .caret { display: flex; justify-content: center; align-items: center; width: 12px; }
    .caret::before { border-width: 3px; border-bottom: 0; }
    .rule { width: 4px; height: 12px; border-left: 1px solid #bcbcbc; margin-right: 1px; }
    .letter { width: 16px; font: bold 12px/16px "Noto Sans", sans-serif; }
    .caption { flex: 1; text-align: center; color: #3c3c3c; padding-bottom: 2px; }
    .account { display: flex; align-items: center; }
    .back { border: 3px solid transparent; border-right-color: #333; border-left: 0; margin-right: 2px; }
    .login { width: 56px; justify-content: flex-start; padding-left: 1px; }
    .gap { width: 8px; }
    .window { display: flex; margin-left: 36px; }

    .menu { display: flex; align-items: stretch; padding-left: 3px; line-height: 13px; color: #333; }
    .menu button { padding: 0 6px; }
    .menu .file { background: #1f7ab5; color: #fff; padding: 0 5px; margin-right: 2px; }
    .menu .on { background: var(--green); padding: 0 4px; }
    .menu .toggle { margin-left: 8px; }
    .pill { width: 10px; height: 6px; border: 1px solid #444; border-radius: 3px; margin-right: 2px; display: flex; align-items: center; justify-content: center; }
    .pill::before { content: ""; border: 2px solid transparent; border-bottom-color: #444; border-top: 0; }

    .ribbon { display: flex; background: var(--green); margin: 0 1px 0 2px; padding-left: 1px; border-bottom: 1px solid #c8d0d0; }
    .panel { display: grid; grid-template-rows: 48px 12px; padding-top: 1px; background: #eee; border-right: 1px solid #e4e4e4; flex: none; }
    .panel > .name { text-align: center; color: #333; }
    .context { border-right-color: #e6ead9; }
    .context > .name { background: var(--green); }
    .body { display: flex; justify-content: center; min-width: 0; }
    .grid { display: grid; align-content: start; justify-items: center; align-items: center; }
    .w38 { width: 38px; } .w40 { width: 40px; } .w51 { width: 51px; } .w113 { width: 113px; } .w154 { width: 154px; }
    .w39 { width: 39px; } .w35 { width: 35px; } .w62 { width: 62px; } .w74 { width: 74px; }
    .tall { flex-direction: column; justify-content: flex-start; line-height: 10px; }
    .tall span { padding-top: 1px; }
    .modify { width: 28px; height: 47px; background: #b9d8f1; border: 1px solid #4f93c8; color: #222; line-height: 12px; }
    .pressed { background: #b9d8f1; border: 1px solid #4f93c8; width: 26px; height: 23px; overflow: hidden; }
    .dim { color: #a9a9a9; }
    .paste { width: 35px; line-height: 12px; }
    .rows { grid-auto-rows: 16px; }
    .geo { justify-items: start; width: 66px; }
    .geo button { gap: 1px; }
    .bigs { grid-template-columns: repeat(4, 25px); grid-auto-rows: 24px; }
    .two { grid-template-columns: repeat(2, 25px); }
    .smalls { grid-template-columns: repeat(3, 17px); grid-auto-rows: 16px; }
    .views { grid-template-columns: 16px 7px 16px; grid-auto-rows: 16px; }
    .meas { grid-template-columns: 26px 8px; grid-auto-rows: 24px; }
    .pair { grid-template-columns: 16px 16px 8px; grid-auto-rows: 16px; }
    .gray { gap: 4px; }

    .options { display: flex; align-items: center; background: var(--green); margin: 0 1px 0 2px; padding-left: 5px; border-bottom: 1px solid #dde3d2; }
    .options select { width: 127px; height: 14px; background-color: #e4e6e0; border: 1px solid #b9bcb4; padding-left: 1px; margin-bottom: 1px; }
    .options .hint { padding: 1px 10px 0 4px; }
    .options .bar { width: 7px; height: 14px; border-left: 1px solid #c3c9ba; }
    .options .dims { height: 15px; background: #fafafa; border: 1px solid #c0c0c0; padding: 0 3px; }

    .main { display: grid; grid-template-columns: 255px minmax(0, 1fr); column-gap: 2px; min-height: 0; }

    .palette { display: flex; flex-direction: column; margin-left: 2px; border: 1px solid #bbb; border-top: 0; background: #fff; min-height: 0; }
    .bar-title { display: flex; justify-content: space-between; align-items: center; height: 15px; padding: 1px 1px 0 1px; background: var(--face); border-bottom: 1px solid #ddd; }
    .x { width: 10px; height: 12px; }
    .x svg { display: block; }
    .type { display: flex; align-items: center; height: 46px; background: #ebebeb; padding: 0 0 1px 2px; gap: 3px; color: #444; }
    .type .pic { width: 43px; height: 43px; background: #fff; border: 1px solid #ddd; }
    .type span { flex: 1; }
    .type .caret { width: 8px; }
    .filter { display: flex; height: 14px; background: var(--face); gap: 3px; }
    .filter select { width: 189px; height: 14px; background-color: #e3e3e3; border: 1px solid #c4c4c4; padding-left: 1px; }
    .props { border-collapse: collapse; width: 100%; table-layout: fixed; margin-top: 1px; }
    .props td, .props th { padding: 0; height: 12px; line-height: 10px; font-weight: normal; text-align: left; border-bottom: 1px solid #c4c4c4; border-right: 1px solid #c4c4c4; overflow: hidden; white-space: nowrap; }
    .props tr:nth-child(even) > * { height: 11px; }
    .props tr.head > * { height: 12px; background: #dcdcdc; border-color: #dcdcdc; padding-left: 1px; }
    .props tr.head > td { padding: 0; }
    .props .c1 { width: 123px; } .props .c3 { width: 9px; }
    .props tr:not(.head) th { padding-left: 6px; }
    .props input[type="text"] { display: block; width: 100%; height: 10px; padding-left: 1px; }
    .props .off { color: #8c8c8c; }
    .props .focus input[type="text"] { border: 1px solid #333; padding-left: 0; }
    .props input[type="checkbox"] { appearance: none; display: block; width: 9px; height: 9px; margin-left: 2px; border: 1px solid #444; background: #fff; }
    .more { width: 7px; height: 10px; background: #e4e4e4; border: 1px solid #bcbcbc; }
    .fold { display: block; width: 6px; height: 8px; }
    .foot { display: flex; align-items: center; justify-content: space-between; margin-top: auto; height: 19px; padding: 0 1px; background: var(--face); }
    .foot a { color: #1a6fc4; }
    .foot button { width: 47px; height: 14px; background: #ccc; border: 1px solid #c0c0c0; color: #8d8d8d; }

    .work { display: grid; grid-template-columns: minmax(0, 1fr) 12px; grid-template-rows: 15px minmax(0, 1fr) 14px; min-height: 0; }
    .docs { grid-column: 1 / -1; display: flex; align-items: stretch; padding-top: 1px; }
    .docs button { justify-content: flex-start; gap: 1px; }
    .docs .idle { width: 101px; background: #c2c2c2; color: #444; margin-right: 1px; }
    .docs .open { display: flex; align-items: center; width: 82px; background: #fff; font-weight: bold; gap: 2px; }
    .docs .open button:first-child { flex: 1; }
    .docs .caret { margin-left: auto; }
    .vbar { background: var(--face); display: flex; flex-direction: column; align-items: center; }
    .vbar button { width: 12px; height: 12px; }
    .vbar .thumb { width: 9px; height: 10px; background: #c6c6c6; }
    .vbar .track { flex: 1; display: flex; align-items: center; }
    .control { grid-column: 1 / -1; display: flex; align-items: center; background: var(--face); border-bottom: 1px solid #d9d9d9; padding-left: 16px; }
    .control .scale { width: 33px; justify-content: flex-start; }
    .control .tools { display: flex; }
    .control .tools button { width: 14px; justify-content: center; }
    .control .track { flex: 1; display: flex; justify-content: center; }
    .control .thumb { width: 10px; height: 10px; background: #c9c9c9; }
    .control .end { width: 14px; }

    .status { display: flex; align-items: center; background: #cbcbcb; padding: 0 61px 2px 3px; border-top: 1px solid #d8d8d8; }
    .status .message { width: 500px; white-space: nowrap; }
    .status select { height: 12px; width: 133px; background-color: #fff; color: #777; padding-left: 2px; margin: 0 2px; }
    .status .num { width: 19px; }
    .status .right { display: flex; align-items: center; margin-left: auto; }
    .status .right button { width: 17px; }

    .marker { position: absolute; left: 2px; top: 187px; width: 253px; height: 75px; border: 3px solid var(--teal); }
    .leader { position: absolute; left: 0; top: 0; pointer-events: none; }
    .zoomed { position: absolute; left: 538px; top: 504px; width: 596px; border: 2px solid var(--teal); background: #fff; color: #222; font: 17px/20px "Open Sans", "Noto Sans", sans-serif; }
    .zoomed table { border-collapse: collapse; width: 100%; table-layout: fixed; }
    .zoomed th, .zoomed td { padding: 0; text-align: left; font-weight: normal; height: 28px; border-bottom: 1px dotted #777; border-right: 1px dotted #777; }
    .zoomed tr.cap th { height: 25px; background: #dcdcdc; border: 0; padding-left: 5px; border-bottom: 1px solid #dcdcdc; }
    .zoomed tr:not(.cap) th { padding-left: 13px; padding-bottom: 2px; }
    .zoomed .c1 { width: 294px; } .zoomed .c3 { width: 16px; }
    .zoomed td input { display: block; width: 100%; height: 27px; padding: 0 0 2px 2px; }
    .zoomed .focus > * { height: 27px; }
    .zoomed .focus input { height: 26px; border: 2px solid #111; padding-left: 1px; }
    .zoomed .more { width: 12px; height: 25px; margin-left: 3px; }
    .zoomed tr:last-child > * { border-bottom: 0; height: 27px; }
    .zoomed tr.cap th:last-child { padding-left: 0; }
    .zoomed .fold { width: 12px; height: 16px; }
  `;

  private cross(n = 10) {
    return html`<svg width=${n} height=${n} viewBox="0 0 10 10"><path d="M2 2.500L8 8.500M8 2.500L2 8.500" stroke="#222" stroke-width="1.300"/></svg>`;
  }

  private chevrons() {
    return html`<svg class="fold" viewBox="0 0 6 8" aria-hidden="true"><path d="M1 3.500L3 1.500L5 3.500M1 7L3 5L5 7" fill="none" stroke="#222" stroke-width="1"/></svg>`;
  }

  private tip(name: string, large = false) {
    return html`<button type="button" aria-label=${name}><tool-icon name=${name} ?large=${large}></tool-icon></button>`;
  }

  private titleBar() {
    return html`<header class="title">
      <div class="quick">
        ${quick.map((q) =>
          q === "." ? html`<span class="dot"></span>`
          : q === "|" ? html`<span class="rule"></span>`
          : q === "A" ? html`<button class="letter" type="button">A</button>`
          : this.tip(q))}
        <span class="caret"></span>
      </div>
      <div class="caption">Autodesk Revit 2021 - ARCH-Documenting-BaseFile - 3D pohled: {3D}</div>
      <div class="account">
        <span class="back"></span>
        ${this.tip("binoc")}${this.tip("user")}
        <button class="login" type="button">Přihlásit se</button>
        <span class="dot"></span><span class="rule"></span>
        ${this.tip("cart")}<span class="gap"></span>${this.tip("help")}<span class="dot"></span>
      </div>
      <div class="window">
        <button type="button" aria-label="min"><svg width="16" height="16"><path d="M5 11H10" stroke="#222" stroke-width="1.500"/></svg></button>
        <button type="button" aria-label="max"><svg width="16" height="16"><rect x="4.500" y="5.500" width="7" height="6" fill="none" stroke="#222"/></svg></button>
        <button type="button" aria-label="close"><svg width="16" height="16"><path d="M5 5L11 11M11 5L5 11" stroke="#222" stroke-width="1.500"/></svg></button>
      </div>
    </header>`;
  }

  private menuBar() {
    return html`<nav class="menu">
      <button class="file" type="button">Soubor</button>
      ${menu.map((m) => html`<button type="button">${m}</button>`)}
      <button class="on" type="button">Upravit | Obecné modely</button>
      <button class="toggle" type="button" aria-label="ribbon"><span class="pill"></span><span class="dot"></span></button>
    </nav>`;
  }

  private ribbon() {
    const t = (n: string) => this.tip(n);
    const b = (n: string) => this.tip(n, true);
    const dot = html`<span class="dot"></span>`;
    const none = html`<span></span>`;
    return html`<section class="ribbon">
      <div class="panel w38"><div class="body"><button class="tall modify" type="button"><tool-icon large name="cursor"></tool-icon>Upravit</button></div>
        <div class="name">Vybrat ▾</div></div>
      <div class="panel w40"><div class="body"><div class="grid">${b("types")}<button class="pressed" type="button" aria-label="props"><tool-icon large name="props"></tool-icon></button></div></div>
        <div class="name">Vlastnosti</div></div>
      <div class="panel w51"><div class="body">
        <button class="tall paste dim" type="button"><tool-icon large name="paste"></tool-icon>Vložit<span class="dot"></span></button>
        <div class="grid rows">${["cut", "copy", "brush"].map(t)}</div></div>
        <div class="name">Schránka</div></div>
      <div class="panel w113"><div class="body">
        <div class="grid rows geo">
          ${[["cope", "Přizpůsobit"], ["trimCut", "Ořezat"], ["join", "Spoj"]].map(([i, n]) => html`<button type="button"><tool-icon name=${i}></tool-icon>${n}<span class="dot"></span></button>`)}
        </div>
        <div class="grid pair">${t("geoA")}${t("geoB")}${none}${t("geoC")}${t("geoD")}${dot}${t("geoE")}${t("hammer")}${none}</div></div>
        <div class="name">Geometrie</div></div>
      <div class="panel w154"><div class="body">
        <div class="grid bigs">${["align", "offset", "mirrorPick", "mirrorDraw", "move", "copyMove", "rotate", "corner"].map(b)}</div>
        <div class="grid smalls">${["splitA", "splitB", "unpin", "array", "scale", "pin", "trimOne", "trimMany", "del"].map(t)}</div></div>
        <div class="name">Upravit</div></div>
      <div class="panel w40"><div class="body">
        <div class="grid views">${t("bulb")}${dot}${t("override")}${t("paint")}${dot}${t("lines")}${t("section")}</div></div>
        <div class="name">Pohled</div></div>
      <div class="panel w39"><div class="body"><div class="grid meas">${b("measureBig")}${dot}${b("dimBig")}${dot}</div></div>
        <div class="name">Měření</div></div>
      <div class="panel w51"><div class="body"><div class="grid bigs two">${["group", "assembly", "parts", "similar"].map(b)}</div></div>
        <div class="name">Vytvořit</div></div>
      <div class="panel context w35"><div class="body"><button class="tall" type="button"><tool-icon large name="family"></tool-icon><span>Upravit<br />rodinu</span></button></div>
        <div class="name">Režim</div></div>
      <div class="panel context w62"><div class="body"><button class="tall" type="button"><tool-icon large name="host"></tool-icon><span>Vybrat<br />nového hostitele</span></button></div>
        <div class="name">Hostitel</div></div>
      <div class="panel context w74"><div class="body gray">
        <button class="tall dim" type="button"><tool-icon large name="relHost"></tool-icon><span>Související<br />hostitelé</span></button>
        <button class="tall dim" type="button"><tool-icon large name="floors"></tool-icon><span>Podlaží<br />objemu</span></button></div>
        <div class="name">Model</div></div>
    </section>`;
  }

  private optionsBar() {
    return html`<section class="options">
      <select aria-label="ROOF-PANEL-4PT"><option>ROOF-PANEL-4PT</option></select>
      <span class="hint">sunout s blízkými prvky.</span><span class="bar"></span>
      <button class="dims" type="button">Aktivovat kóty</button>
    </section>`;
  }

  private propertyRow(r: Row) {
    if (r.head) return html`<tr class="head"><th colspan="2" scope="rowgroup">${r.name}</th><td>${this.chevrons()}</td></tr>`;
    return html`<tr class=${classMap({ off: !!r.off, focus: !!r.focus })}>
      <th scope="row">${r.name}</th>
      <td>${r.check
        ? html`<input type="checkbox" aria-label=${r.name} />`
        : html`<input type="text" aria-label=${r.name} .value=${r.value ?? ""} ?readonly=${!!r.off} />`}</td>
      <td>${r.more ? html`<button class="more" type="button" aria-label=${r.name}></button>` : nothing}</td>
    </tr>`;
  }

  private palette() {
    return html`<aside class="palette">
      <div class="bar-title"><span>Vlastnosti</span><button class="x" type="button" aria-label="close">${this.cross()}</button></div>
      <div class="type">
        <svg class="pic" viewBox="0 0 43 43"><path d="M8 28L15 17L35 14L28 25ZM14 26L25 23.500L31 16L18 19Z" fill="#6d6d6d" fill-rule="evenodd" stroke="#555" stroke-width=".6"/></svg>
        <span>ROOF-PANEL-4PT</span><i class="caret"></i>
      </div>
      <div class="filter">
        <select aria-label="Obecné modely"><option>Obecné modely (1)</option></select>
        <button type="button"><tool-icon name="editType"></tool-icon>Upravit typ</button>
      </div>
      <table class="props">
        <colgroup><col class="c1" /><col /><col class="c3" /></colgroup>
        <tbody>${rows.map((r) => this.propertyRow(r))}</tbody>
      </table>
      <div class="foot"><a href="#">Nápověda k vlastnostem</a><button type="button">Použít</button></div>
    </aside>`;
  }

  private workArea() {
    const arrow = (d: string) => html`<svg width="8" height="8" viewBox="0 0 8 8"><path d=${d} fill="none" stroke="#333" stroke-width="1.400"/></svg>`;
    return html`<section class="work">
      <div class="docs">
        <button class="idle" type="button"><tool-icon name="sheet"></tool-icon>105 - ETFE Schedule</button>
        <div class="open"><button type="button"><tool-icon name="box3d"></tool-icon>{3D}</button><button class="x" type="button" aria-label="close">${this.cross()}</button></div>
        <span class="caret"></span>
      </div>
      <model-canvas></model-canvas>
      <div class="vbar">
        <button type="button" aria-label="up">${arrow("M1.500 5.500L4 3L6.500 5.500")}</button>
        <div class="track"><div class="thumb"></div></div>
        <button type="button" aria-label="down">${arrow("M1.500 3L4 5.500L6.500 3")}</button>
      </div>
      <div class="control">
        <button class="scale" type="button">1 : 96</button>
        <div class="tools">${viewTools.map((v) => this.tip(v))}</div>
        <button type="button" aria-label="left">${arrow("M5 1.500L2.500 4L5 6.500")}</button>
        <div class="track"><div class="thumb"></div></div>
        <button type="button" aria-label="right">${arrow("M3 1.500L5.500 4L3 6.500")}</button>
        <span class="end"></span>
      </div>
    </section>`;
  }

  private statusBar() {
    return html`<footer class="status">
      <span class="message">Klikněte pro výběr, stiskněte klávesu TAB pro alternativy, CTRL pro přidání, SHIFT pro odebrání prvků.</span>
      ${this.tip("worksets")}
      <select aria-label="worksets"><option></option></select>
      ${this.tip("filterOff")}<span class="num">:0</span>
      ${this.tip("options")}${this.tip("active")}
      <select aria-label="model"><option>Hlavní model</option></select>
      <div class="right">${["selLinks", "selUnder", "selPin", "selFace", "selDrag", "progress", "funnel"].map((n) => this.tip(n))}<span>:1</span></div>
    </footer>`;
  }

  private callout() {
    return html`
      <div class="marker"></div>
      <svg class="leader" width="1140" height="680" fill="none"><path d="M255 187.500L1133 504M3 261L539 670" stroke="#1a8ba1" stroke-width="1.300"/></svg>
      <div class="zoomed"><table>
        <colgroup><col class="c1" /><col /><col class="c3" /></colgroup>
        <tbody>
          <tr class="cap"><th colspan="2" scope="rowgroup">Text</th><th>${this.chevrons()}</th></tr>
          ${rows.slice(1, 6).map((r) => html`<tr class=${classMap({ focus: !!r.focus })}>
            <th scope="row">${r.name}</th>
            <td><input type="text" aria-label=${r.name} .value=${r.value ?? ""} /></td>
            <td><button class="more" type="button" aria-label=${r.name}></button></td></tr>`)}
        </tbody></table></div>`;
  }

  render() {
    return html`${this.titleBar()}${this.menuBar()}${this.ribbon()}${this.optionsBar()}
      <main class="main">${this.palette()}${this.workArea()}</main>
      ${this.statusBar()}${this.callout()}`;
  }
}
